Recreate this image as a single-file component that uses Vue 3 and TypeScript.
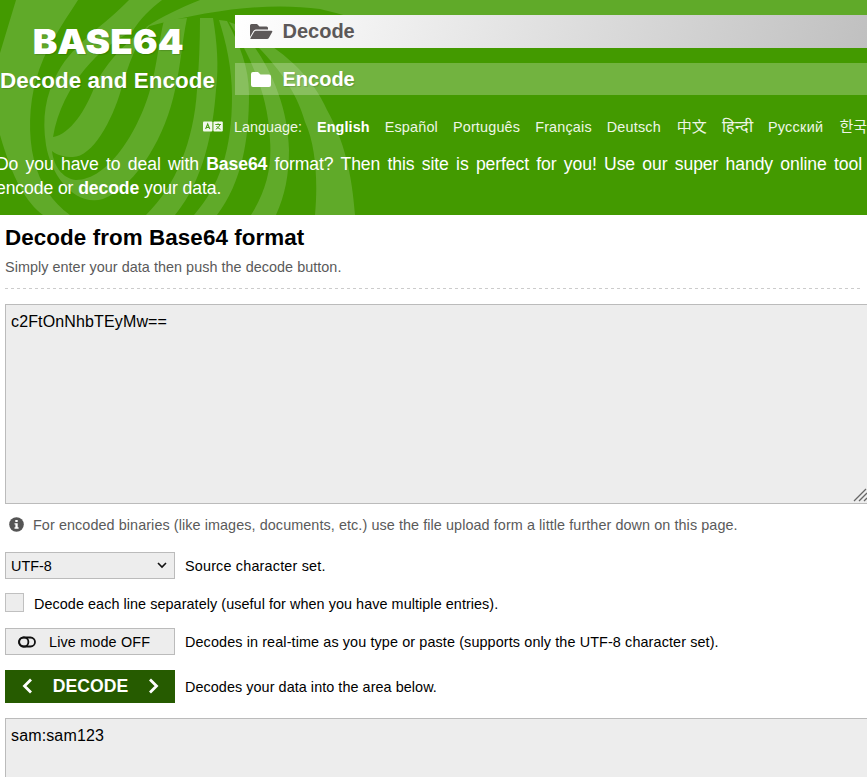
<script setup lang="ts">
import { ref } from 'vue'

interface Language {
  label: string
  active?: boolean
  script?: string
}

const languages: Language[] = [
  { label: 'English', active: true },
  { label: 'Español' },
  { label: 'Português' },
  { label: 'Français' },
  { label: 'Deutsch' },
  { label: '中文', script: 'cjk' },
  { label: 'हिन्दी', script: 'hindi' },
  { label: 'Русский', script: 'cyrillic' },
  { label: '한국어', script: 'cjk' },
]

const source = ref('c2FtOnNhbTEyMw==')
const result = ref('sam:sam123')
</script>

<template>
  <div class="page">
    <header class="header">
      <svg class="swirl" width="867" height="215" viewBox="0 0 867 215" aria-hidden="true">
        <g fill="#60aa29">
          <path d="M16 0H78C62 25 44 50 36 80C29 105 28 135 34 160C40 184 52 202 70 215H43C26 202 13 180 0 135V53Z" />
          <path d="M129 0H162C150 9 140 19 132 32C102 44 62 85 53 137C71 134 86 109 94 88C106 60 133 36 150 25C137 40 128 66 121 90C112 121 92 158 72 157C64 157 57 155 52 151C54 169 65 179 76 180C108 180 138 132 150 90C157 66 159 40 164 20L187 18C182 42 181 64 175 90C166 134 138 185 103 199C75 207 51 176 46 145C42 118 45 96 58 72C74 43 105 25 129 0Z" />
          <path d="M200 18L213 18C217 42 219 66 216 90C213 130 204 180 175 215H146C176 186 194 140 197 90C199 66 200 42 200 18Z" />
          <path d="M219 20L227 21C240 45 249 68 249 94C249 140 242 182 217 215H194C220 185 232 150 232 96C232 68 226 42 219 20Z" />
          <path d="M229 22L235 24C262 50 288 98 289 150C289 175 285 195 276 215H251C267 190 272 165 270 140C268 91 247 50 229 22Z" />
          <path d="M235 24C280 48 310 72 327 110C344 140 352 174 355 215H315C318 183 316 145 305 122C294 82 266 54 235 24Z" />
          <path d="M200 0H867V26H390C363 21 341 14 320 9C275 3 220 7 146 27C163 16 180 8 200 0Z" />
        </g>
      </svg>

      <div class="top">
        <div class="brand">
          <div class="logo">BASE64</div>
          <div class="tagline">Decode and Encode</div>
        </div>
        <nav class="tabs">
          <a class="tab current">
            <svg class="tab-icon" width="24" height="18" viewBox="0 0 24 18">
              <path d="M1 1.500Q1 0 2.500 0H8L10.500 2.500H17.500Q19 2.500 19 4V5.500H7Q5.300 5.500 4.400 7L1 13Z" fill="#5c5858" />
              <path d="M7 6.700H22.500Q23.700 6.700 23.200 7.900L19.800 14Q19.200 15 18 15H2.200Q1 15 1.500 14L5 8Q5.800 6.700 7 6.700Z" fill="#5c5858" />
            </svg>
            <span>Decode</span>
          </a>
          <a class="tab">
            <svg class="tab-icon" width="24" height="18" viewBox="0 0 24 18">
              <path d="M2 2Q2 0 4 0H9L11.500 2.500H20Q22 2.500 22 4.500V13Q22 15 20 15H4Q2 15 2 13Z" fill="#fff" />
            </svg>
            <span>Encode</span>
          </a>
        </nav>
      </div>

      <div class="languages">
        <svg class="lang-icon" width="20" height="12" viewBox="0 0 20 12">
          <rect x="0" y="0.500" width="9.400" height="10" rx="1" fill="#f2f8ed" />
          <rect x="10.400" y="0.500" width="9.400" height="10" rx="1" fill="#f2f8ed" />
          <path d="M2.600 8L4.700 3L6.800 8M3.400 6.500H6" fill="none" stroke="#4e9d17" stroke-width="1.100" />
          <path d="M12.300 3.500H18M15.100 2.300V3.500M17 3.500Q16 6.700 12.800 8.300M13.500 5Q15 7.500 17.500 8.300" fill="none" stroke="#4e9d17" stroke-width="1" />
        </svg>
        <span class="lang-label">Language:</span>
        <a v-for="lang in languages" :key="lang.label" class="lang" :class="[lang.script, { active: lang.active }]">{{ lang.label }}</a>
      </div>

      <div class="intro">
        <p class="line full">Do you have to deal with <b>Base64</b> format? Then this site is perfect for you! Use our super handy online tool</p>
        <p class="line">encode or <b>decode</b> your data.</p>
      </div>
    </header>

    <main class="main">
      <h1>Decode from Base64 format</h1>
      <p class="sub">Simply enter your data then push the decode button.</p>
      <div class="rule"></div>

      <div class="editor">
        <textarea v-model="source" class="area" spellcheck="false"></textarea>
        <svg class="grip" width="14" height="14" viewBox="0 0 14 14">
          <path d="M1 13L13 1M6 13L14 5M11 13L14 10" stroke="#666" stroke-width="1.300" fill="none" />
        </svg>
      </div>

      <p class="info">
        <svg class="info-icon" width="15" height="15" viewBox="0 0 15 15">
          <circle cx="7.500" cy="7.500" r="7.300" fill="#555" />
          <path d="M6.300 3H8.700V5H6.300ZM5.500 6.200H8.700V10.200H9.600V11.700H5.500V10.200H6.400V7.600H5.500Z" fill="#fff" />
        </svg>
        <span>For encoded binaries (like images, documents, etc.) use the file upload form a little further down on this page.</span>
      </p>

      <div class="row charset-row">
        <div class="control select">
          <span>UTF-8</span>
          <svg width="10" height="7" viewBox="0 0 10 7">
            <path d="M1 1L5 5L9 1" fill="none" stroke="#111" stroke-width="1.600" />
          </svg>
        </div>
        <span class="charset-note">Source character set.</span>
      </div>

      <div class="row lines-row">
        <span class="checkbox"></span>
        <span class="lines-note">Decode each line separately (useful for when you have multiple entries).</span>
      </div>

      <div class="row live-row">
        <button class="control live">
          <svg width="18" height="12" viewBox="0 0 18 12">
            <rect x="1" y="1.500" width="16" height="9" rx="4.500" fill="none" stroke="#111" stroke-width="1.800" />
            <circle cx="5.800" cy="6" r="4.600" fill="none" stroke="#111" stroke-width="1.800" />
          </svg>
          <span>Live mode OFF</span>
        </button>
        <span class="live-note">Decodes in real-time as you type or paste (supports only the UTF-8 character set).</span>
      </div>

      <div class="row decode-row">
        <button class="decode">
          <svg width="11" height="16" viewBox="0 0 11 16">
            <path d="M9 1.500L2.500 8L9 14.500" fill="none" stroke="#fff" stroke-width="2.800" />
          </svg>
          <span>DECODE</span>
          <svg width="11" height="16" viewBox="0 0 11 16">
            <path d="M2 1.500L8.500 8L2 14.500" fill="none" stroke="#fff" stroke-width="2.800" />
          </svg>
        </button>
        <span class="decode-note">Decodes your data into the area below.</span>
      </div>

      <textarea v-model="result" class="area output" spellcheck="false" readonly></textarea>
    </main>
  </div>
</template>

<style>
body {
  margin: 0;
  overflow: hidden;
}
</style>

<style scoped>
.page {
  width: 867px;
  height: 777px;
  overflow: hidden;
  background: #fff;
  color: #000;
  font-family: "Liberation Sans", Arial, "Noto Sans CJK SC", "Noto Sans CJK KR", sans-serif;
  font-size: 14.4px;
}
p, h1 {
  margin: 0;
}
.header {
  position: relative;
  height: 215px;
  background: #439a00;
  color: #fff;
  overflow: hidden;
}
.swirl {
  position: absolute;
  inset: 0;
}
.top {
  position: relative;
  display: flex;
  height: 95px;
}
.brand {
  width: 235px;
  flex: none;
  white-space: nowrap;
}
.logo {
  box-sizing: border-box;
  width: 200px;
  height: 67px;
  padding: 21px 0 0 30.5px;
  font-family: Inter, "Liberation Sans", sans-serif;
  font-size: 34.5px;
  line-height: 42px;
  font-weight: 900;
  transform: scaleX(1.07);
  transform-origin: 0 0;
  text-shadow: 1px 1px 1px rgba(0, 0, 0, 0.15);
}
.tagline {
  font-size: 22.4px;
  line-height: 27px;
  font-weight: 700;
  letter-spacing: 0.06px;
  text-shadow: 1px 1px 1px rgba(0, 0, 0, 0.15);
}
.tabs {
  flex: 1;
  display: flex;
  flex-direction: column;
  gap: 15px;
  padding-top: 15px;
}
.tab {
  display: flex;
  align-items: center;
  gap: 9.5px;
  height: 32px;
  padding-left: 14px;
  font-size: 20px;
  font-weight: 700;
  background: rgba(255, 255, 255, 0.25);
  text-shadow: 1px 1px 1px rgba(0, 0, 0, 0.15);
}
.tab.current {
  height: 33px;
  color: #5c5858;
  background: linear-gradient(105deg, #fff 0%, #c0c0c0 100%);
  text-shadow: none;
}
.tab-icon {
  margin-top: 3px;
}
.languages {
  position: relative;
  display: flex;
  align-items: center;
  height: 24px;
  margin-top: 20px;
  margin-bottom: 13px;
  padding-left: 203px;
  line-height: 24px;
  white-space: nowrap;
  color: #eef6e6;
}
.lang-icon {
  flex: none;
  margin-right: 11px;
}
.lang-label {
  flex: none;
  width: 83px;
}
.lang {
  flex: none;
  margin-right: 15px;
  letter-spacing: 0.18px;
}
.lang.active {
  color: #fff;
  font-weight: 700;
  letter-spacing: 0.1px;
}
.lang.cjk {
  padding-left: 1px;
  font-size: 15px;
  letter-spacing: 0;
}
.lang.hindi {
  font-size: 16px;
  letter-spacing: 0;
}
.lang.cyrillic {
  letter-spacing: 0.3px;
}
.intro {
  position: relative;
  margin-left: -4px;
  width: 866px;
  font-size: 17.6px;
  line-height: 24px;
  letter-spacing: -0.1px;
}
.line {
  white-space: nowrap;
}
.line.full {
  white-space: normal;
  text-align-last: justify;
}
.main {
  padding-left: 5px;
}
h1 {
  padding-top: 9px;
  font-size: 22.4px;
  line-height: 27px;
  letter-spacing: 0.08px;
}
.sub {
  margin-top: 7px;
  line-height: 18px;
  letter-spacing: 0.04px;
  color: #5a5a5a;
}
.rule {
  width: 858px;
  height: 1px;
  margin-top: 12px;
  background: repeating-linear-gradient(90deg, #ccc 0 3px, transparent 3px 6px);
}
.editor {
  position: relative;
  margin-top: 15px;
}
.area {
  display: block;
  box-sizing: border-box;
  width: 880px;
  height: 200px;
  margin: 0;
  padding: 7px 5px;
  border: 1px solid #bbb;
  outline: none;
  resize: none;
  background: #ededed;
  color: #000;
  font: 16px/20px "Liberation Sans", Arial, sans-serif;
  letter-spacing: 0.14px;
}
.grip {
  position: absolute;
  left: 848px;
  top: 184px;
}
.info {
  display: flex;
  align-items: center;
  gap: 9px;
  height: 20px;
  margin-top: 11px;
  padding-left: 4px;
  color: #5a5a5a;
  white-space: nowrap;
  letter-spacing: 0.078px;
}
.info-icon {
  flex: none;
  margin-top: -1px;
}
.row {
  display: flex;
  align-items: center;
  gap: 10px;
  white-space: nowrap;
}
.control {
  display: flex;
  align-items: center;
  box-sizing: border-box;
  width: 170px;
  height: 27px;
  border: 1px solid #bbb;
  background: #ededed;
  color: #000;
  font: inherit;
}
.charset-row {
  margin-top: 17px;
}
.charset-note {
  letter-spacing: 0.18px;
}
.select {
  justify-content: space-between;
  padding: 0 7px 0 5px;
}
.lines-row {
  height: 20px;
  margin-top: 14px;
}
.lines-note {
  padding-top: 1px;
  letter-spacing: 0.06px;
}
.checkbox {
  align-self: flex-start;
  box-sizing: border-box;
  width: 19px;
  height: 19px;
  border: 1px solid #c0c0c0;
  background: #ededed;
}
.live-row {
  margin-top: 15px;
}
.live-note {
  letter-spacing: 0.11px;
}
.live {
  gap: 13px;
  padding: 0 0 0 12px;
  letter-spacing: 0.15px;
}
.decode-row {
  margin-top: 15px;
}
.decode-note {
  letter-spacing: 0.06px;
}
.decode {
  display: flex;
  align-items: center;
  justify-content: space-between;
  width: 170px;
  height: 33px;
  padding: 0 16px 1px 17px;
  border: 0;
  background: #265b00;
  color: #fff;
  font: 700 17.6px/20px "Liberation Sans", Arial, sans-serif;
}
.output {
  margin-top: 15px;
}
</style>
